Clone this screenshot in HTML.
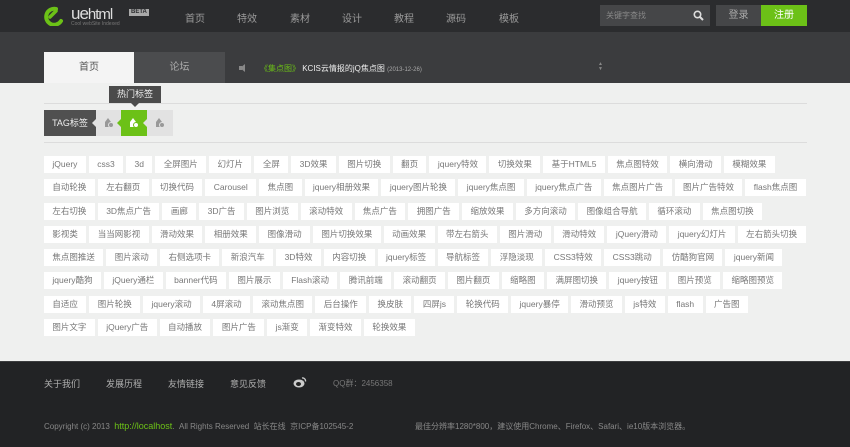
<!DOCTYPE html>
<html><head><meta charset="utf-8">
<style>
*{margin:0;padding:0;box-sizing:border-box}
body{width:850px;height:447px;overflow:hidden;background:#eff0ef;font-family:"Liberation Sans","Noto Sans CJK SC",sans-serif;position:relative}
.hd{position:absolute;left:0;top:0;width:850px;height:32px;background:#2b2c2e}
.nav span{position:absolute;top:10px;font-size:10px;color:#9a9a9a}
.band{position:absolute;left:0;top:32px;width:850px;height:51px;background:#3b3c3e}
.tab1{position:absolute;left:44px;top:52px;width:90px;height:31px;background:#f4f4f4;color:#555;font-size:10px;text-align:center;line-height:31px}
.tab2{position:absolute;left:134px;top:52px;width:91px;height:31px;background:#4b4c4e;color:#aaa;font-size:10px;text-align:center;line-height:31px}
.tags{position:absolute;left:44px;top:156px;width:800px}
.row{height:23.3px;display:flex;flex-wrap:nowrap}
.row span{display:block;flex:none;background:#fff;color:#777;font-size:8.5px;height:17px;line-height:17px;padding:0 8.4px;margin-right:3px}
.ft{position:absolute;left:0;top:361px;width:850px;height:86px;background:#222325;border-top:1px solid #3c3d3f}
.ft span{position:absolute;font-size:9px;color:#b0b0b0}
</style></head><body>
<div class="hd">
 <svg style="position:absolute;left:43px;top:6px" width="22" height="20" viewBox="0 0 22 20"><path d="M13 3 A8 8 0 1 0 18 15" fill="none" stroke="#6cc117" stroke-width="4" stroke-linecap="round"/><path d="M7 11 L13 5" stroke="#6cc117" stroke-width="3.5" stroke-linecap="round"/></svg>
 <div style="position:absolute;left:71px;top:4px;font-size:17px;color:#ddd;letter-spacing:-1px;font-weight:300">ue<span style="font-size:15px">html</span></div>
 <div style="position:absolute;left:129px;top:9px;background:#aaa;color:#2b2c2e;font-size:6px;font-weight:bold;padding:0 2px;line-height:7px">BETA</div>
 <div style="position:absolute;left:71px;top:21px;font-size:5px;color:#777">Cool webSite Indexed</div>
 <div class="nav"><span style="left:185px">首页</span><span style="left:237px">特效</span><span style="left:290px">素材</span><span style="left:342px">设计</span><span style="left:394px">教程</span><span style="left:446px">源码</span><span style="left:499px">模板</span></div>
 <div style="position:absolute;left:600px;top:5px;width:110px;height:21px;background:#454648;color:#888;font-size:8px;line-height:21px;padding-left:6px">关键字查找
  <svg style="position:absolute;right:6px;top:5px" width="11" height="11" viewBox="0 0 11 11"><circle cx="4.5" cy="4.5" r="3.2" fill="none" stroke="#ddd" stroke-width="1.6"/><path d="M7 7 L10 10" stroke="#ddd" stroke-width="2"/></svg></div>
 <div style="position:absolute;left:716px;top:5px;width:45px;height:21px;background:#454648;color:#aaa;font-size:10px;text-align:center;line-height:21px">登录</div>
 <div style="position:absolute;left:761px;top:5px;width:46px;height:21px;background:#6cc117;color:#fff;font-size:10px;text-align:center;line-height:21px">注册</div>
</div>
<div class="band"></div>
<div class="tab1">首页</div><div class="tab2">论坛</div>
<div style="position:absolute;left:240px;top:64px;width:0;height:0;border-right:5px solid #888;border-top:4px solid transparent;border-bottom:4px solid transparent"></div>
<div style="position:absolute;left:239px;top:66px;width:3px;height:4px;background:#888"></div>
<div style="position:absolute;left:260px;top:63px;font-size:8px;color:#eee;white-space:nowrap"><span style="color:#6cc117">《集点图》</span> KCIS云情报的jQ焦点图 <span style="font-size:6px;color:#aaa">(2013-12-26)</span></div>
<div style="position:absolute;left:598px;top:62px;font-size:5px;color:#888;line-height:5px">▲<br>▼</div>
<div style="position:absolute;left:44px;top:103px;width:763px;height:1px;background:#dcdcdc"></div>
<div style="position:absolute;left:44px;top:142px;width:763px;height:1px;background:#dcdcdc"></div>
<div style="position:absolute;left:109px;top:86px;width:52px;height:17px;background:#4b4b4b;color:#eee;font-size:9px;text-align:center;line-height:17px">热门标签</div>
<div style="position:absolute;left:131px;top:103px;border-top:4px solid #4b4b4b;border-left:4px solid transparent;border-right:4px solid transparent"></div>
<div style="position:absolute;left:44px;top:110px;width:52px;height:26px;background:#505050;color:#eee;font-size:9px;text-align:center;line-height:26px">TAG标签</div>
<div style="position:absolute;left:96px;top:110px;width:77px;height:26px;background:#e2e2e2"></div>
<div style="position:absolute;left:121px;top:110px;width:26px;height:26px;background:#6cc117"></div>
<div style="position:absolute;left:92px;top:119px;border-left:4px solid #e2e2e2;border-top:4px solid transparent;border-bottom:4px solid transparent;transform:rotate(180deg)"></div>
<div style="position:absolute;left:117px;top:119px;border-right:4px solid #6cc117;border-top:4px solid transparent;border-bottom:4px solid transparent"></div>
<div style="position:absolute;left:143px;top:119px;border-right:4px solid #e2e2e2;border-top:4px solid transparent;border-bottom:4px solid transparent"></div>
<svg style="position:absolute;left:104px;top:117px" width="10" height="11" viewBox="0 0 10 11"><path d="M1 5 L4 1 L7 5 L7 10 L1 10Z" fill="#999"/><circle cx="7" cy="8" r="2.5" fill="#999" stroke="#e2e2e2"/></svg>
<svg style="position:absolute;left:129px;top:117px" width="10" height="11" viewBox="0 0 10 11"><path d="M1 5 L4 1 L7 5 L7 10 L1 10Z" fill="#fff"/><circle cx="7" cy="8" r="2.5" fill="#fff" stroke="#6cc117"/></svg>
<svg style="position:absolute;left:155px;top:117px" width="10" height="11" viewBox="0 0 10 11"><path d="M1 5 L4 1 L7 5 L7 10 L1 10Z" fill="#999"/><circle cx="7" cy="8" r="2.5" fill="#999" stroke="#e2e2e2"/></svg>
<div class="tags">
<div class="row"><span>jQuery</span><span>css3</span><span>3d</span><span>全屏图片</span><span>幻灯片</span><span>全屏</span><span>3D效果</span><span>图片切换</span><span>翻页</span><span>jquery特效</span><span>切换效果</span><span>基于HTML5</span><span>焦点图特效</span><span>横向滑动</span><span>模糊效果</span></div>
<div class="row"><span>自动轮换</span><span>左右翻页</span><span>切换代码</span><span>Carousel</span><span>焦点图</span><span>jquery相册效果</span><span>jquery图片轮换</span><span>jquery焦点图</span><span>jquery焦点广告</span><span>焦点图片广告</span><span>图片广告特效</span><span>flash焦点图</span></div>
<div class="row"><span>左右切换</span><span>3D焦点广告</span><span>画廊</span><span>3D广告</span><span>图片浏览</span><span>滚动特效</span><span>焦点广告</span><span>拥图广告</span><span>缩放效果</span><span>多方向滚动</span><span>图像组合导航</span><span>循环滚动</span><span>焦点图切换</span></div>
<div class="row"><span>影视类</span><span>当当网影视</span><span>滑动效果</span><span>相册效果</span><span>图像滑动</span><span>图片切换效果</span><span>动画效果</span><span>带左右箭头</span><span>图片滑动</span><span>滑动特效</span><span>jQuery滑动</span><span>jquery幻灯片</span><span>左右箭头切换</span></div>
<div class="row"><span>焦点图推送</span><span>图片滚动</span><span>右侧选项卡</span><span>新浪汽车</span><span>3D特效</span><span>内容切换</span><span>jquery标签</span><span>导航标签</span><span>浮隐淡现</span><span>CSS3特效</span><span>CSS3跳动</span><span>仿酷狗官网</span><span>jquery新闻</span></div>
<div class="row"><span>jquery酷狗</span><span>jQuery通栏</span><span>banner代码</span><span>图片展示</span><span>Flash滚动</span><span>腾讯前端</span><span>滚动翻页</span><span>图片翻页</span><span>缩略图</span><span>满屏图切换</span><span>jquery按钮</span><span>图片预览</span><span>缩略图预览</span></div>
<div class="row"><span>自适应</span><span>图片轮换</span><span>jquery滚动</span><span>4屏滚动</span><span>滚动焦点图</span><span>后台操作</span><span>换皮肤</span><span>四屏js</span><span>轮换代码</span><span>jquery暴停</span><span>滑动预览</span><span>js特效</span><span>flash</span><span>广告图</span></div>
<div class="row"><span>图片文字</span><span>jQuery广告</span><span>自动播放</span><span>图片广告</span><span>js渐变</span><span>渐变特效</span><span>轮换效果</span></div>
</div>
<div class="ft">
 <span style="left:44px;top:15px">关于我们</span><span style="left:106px;top:15px">发展历程</span><span style="left:168px;top:15px">友情链接</span><span style="left:230px;top:15px">意见反馈</span>
 <svg style="position:absolute;left:293px;top:14px" width="14" height="12" viewBox="0 0 14 12"><ellipse cx="6" cy="7.5" rx="5.5" ry="4" fill="#ccc"/><ellipse cx="5.5" cy="8" rx="2.5" ry="2" fill="#222"/><path d="M9 2 A3 3 0 0 1 12.5 5.5" stroke="#ccc" fill="none" stroke-width="1.3"/></svg>
 <span style="left:333px;top:16px;font-size:8px;color:#777">QQ群：2456358</span>
 <span style="left:44px;top:59px;font-size:8px;color:#888">Copyright (c) 2013 &nbsp;<span style="position:static;color:#6cc117">http://localhost</span>. &nbsp;All Rights Reserved &nbsp;站长在线 &nbsp;京ICP备102545-2</span>
 <span style="left:415px;top:59px;font-size:8px;color:#888">最佳分辨率1280*800，建议使用Chrome、Firefox、Safari、ie10版本浏览器。</span>
</div>
</body></html>
